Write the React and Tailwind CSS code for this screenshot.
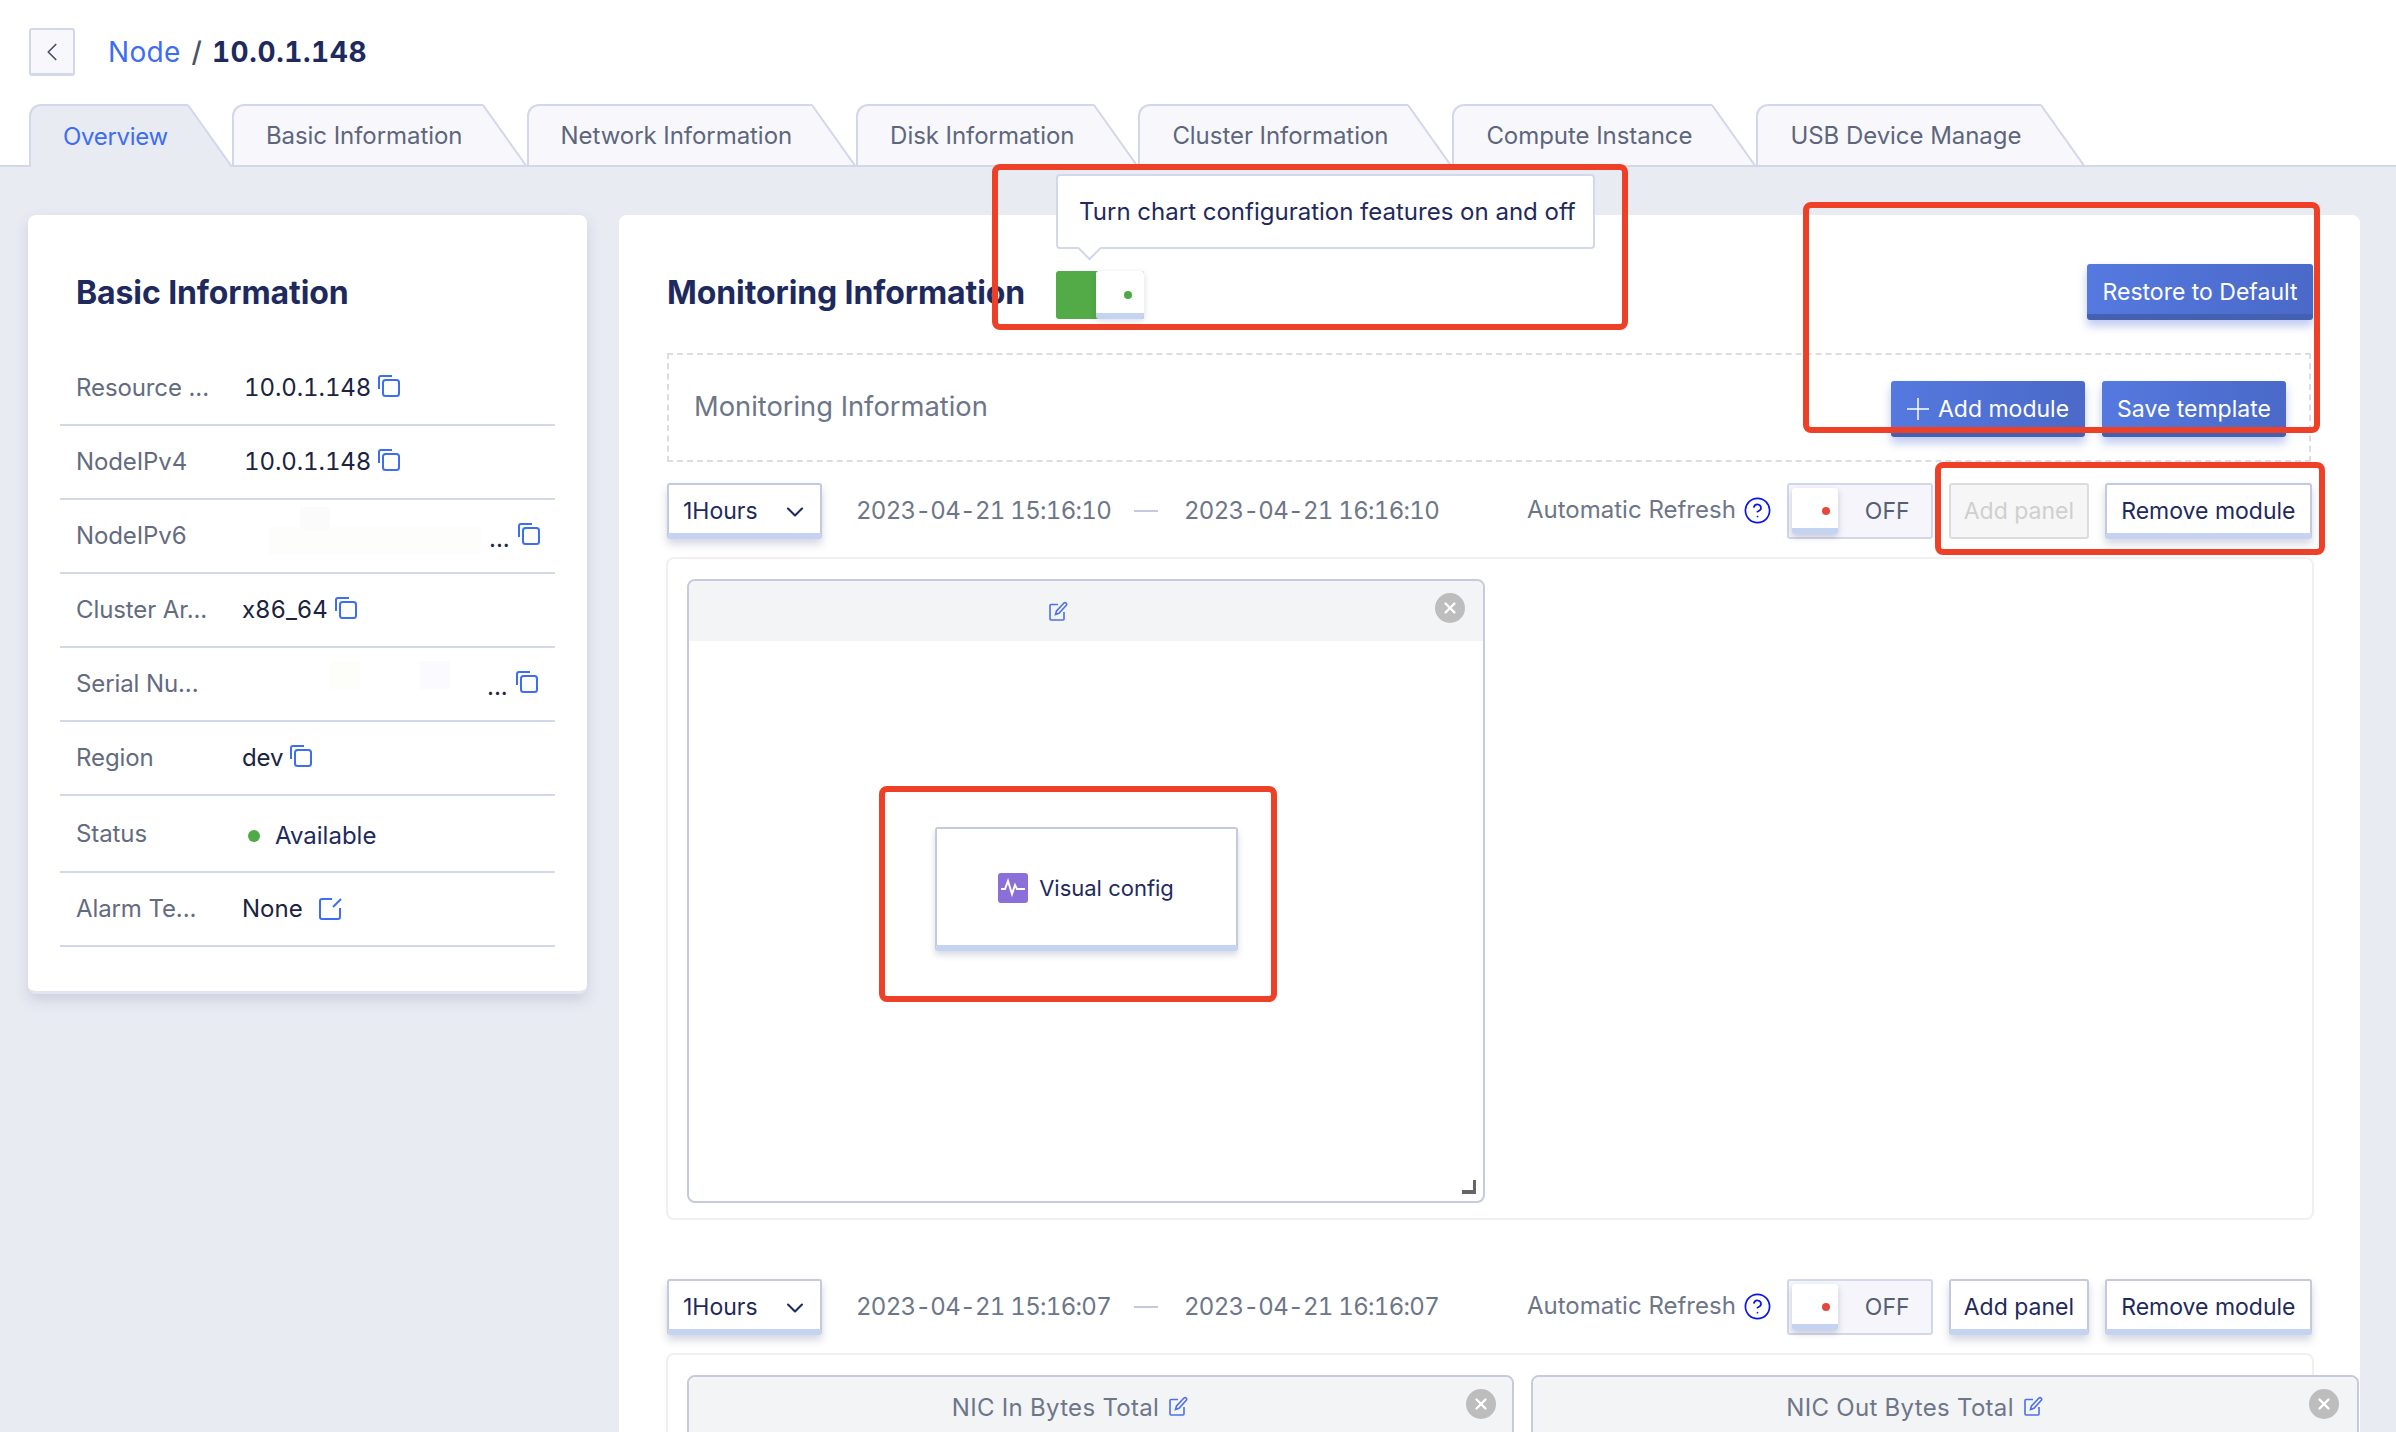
import React from 'react'
import { ChevronDown, ChevronLeft, CircleHelp, X } from 'lucide-react'

const tabs = ['Overview', 'Basic Information', 'Network Information', 'Disk Information', 'Cluster Information', 'Compute Instance', 'USB Device Manage']

const CopyIcon = () => (
  <svg width="22" height="22" viewBox="0 0 22 22" fill="none" stroke="#3d6df2" strokeWidth="2" className="shrink-0">
    <rect x="5" y="5" width="16" height="16" rx="2.5" />
    <path d="M1 14V3a2 2 0 0 1 2-2h11" />
  </svg>
)

const AlarmEditIcon = () => (
  <svg width="23" height="23" viewBox="0 0 23 23" fill="none" stroke="#3d6df2" strokeWidth="2" className="shrink-0">
    <path d="M13 2H3a2 2 0 0 0-2 2v16a2 2 0 0 0 2 2h16a2 2 0 0 0 2-2V11" />
    <path d="M14 10l8-8" />
  </svg>
)

const PenIcon = () => (
  <svg width="19" height="20" viewBox="0 0 19 20" fill="none" stroke="#4d6fe8" strokeWidth="1.6" className="shrink-0">
    <path d="M9 3.500H2a1 1 0 0 0-1 1V18a1 1 0 0 0 1 1h12a1 1 0 0 0 1-1v-7" />
    <path d="M6.500 13.500l1-3.500 7.500-8a1.400 1.400 0 0 1 2 0l.3.300a1.400 1.400 0 0 1 0 2l-7.300 8z" />
  </svg>
)

const Tab = ({ label, active }) => {
  const fill = active ? '#e9ebf3' : '#f8f8fc'
  return (
    <div className="flex">
      <div className={`h-[63px] pl-[32px] pr-[20px] flex items-center border-l-2 border-t-2 border-[#d3d7ea] rounded-tl-xl ${active ? 'bg-[#e9ebf3] text-[#3d6df2]' : 'bg-[#f8f8fc] text-[#5d667c] border-b-2'}`}>
        <span className={`text-[24px] whitespace-nowrap mt-[1px] ${active ? 'tracking-[-0.3px]' : 'tracking-[-0.05px]'}`}>{label}</span>
      </div>
      <svg width="44" height="63" viewBox="0 0 44 63" className="shrink-0">
        <polygon points="0,1 0,63 44,63" fill={fill} />
        <path d="M0 1L44 63" stroke="#d3d7ea" strokeWidth="2" fill="none" />
        {!active && <path d="M0 62H44" stroke="#d3d7ea" strokeWidth="2" />}
      </svg>
    </div>
  )
}

const InfoRow = ({ label, h = 'h-[74px]', children }) => (
  <div className={`${h} flex items-center pl-[16px] border-b-2 border-[#d3d7ea]`}>
    <span className="w-[166px] shrink-0 text-[24px] tracking-[-0.1px] text-[#636b80] whitespace-nowrap">{label}</span>
    {children}
  </div>
)

const CopyValue = ({ value, pl = 'pl-0' }) => (
  <div className={`flex items-center gap-[7px] ${pl} text-[24px] tracking-[-0.1px] tabular-nums text-[#1a2340]`}>
    <span>{value}</span>
    <span className="-mt-[4px]"><CopyIcon /></span>
  </div>
)

const Redacted = ({ dots = 'pl-[247px]', children }) => (
  <div className={`relative flex items-center gap-[8px] ${dots} text-[24px] text-[#1a2340]`}>
    {children}
    <span className="mt-[6px]">...</span>
    <span className="-mt-[4px]"><CopyIcon /></span>
  </div>
)

const SolidBtn = ({ className, children }) => (
  <div className={`h-[56px] pt-[6px] flex items-center justify-center gap-[9px] rounded-[3px] text-[23px] text-white border-b-[6px] border-[#4460b0] bg-gradient-to-r from-[#5579e0] to-[#4a69c8] shadow-[0_6px_10px_rgba(70,100,210,0.35)] ${className}`}>
    {children}
  </div>
)

const OutlineBtn = ({ className, children }) => (
  <div className={`h-[56px] pt-[5px] flex items-center justify-center rounded-[3px] bg-white text-[23px] text-[#1e2a5e] border-2 border-[#c4c9de] border-b-[6px] border-b-[#c5d3f3] shadow-[0_5px_8px_rgba(60,70,110,0.22)] ${className}`}>
    {children}
  </div>
)

const Controls = ({ from, to, disabled }) => (
  <div className="flex items-center h-[56px] w-[1646px]">
    <OutlineBtn className="w-[155px] pl-[14px] pr-[11px] !justify-between">
      <span>1Hours</span>
      <ChevronDown size={28} strokeWidth={1.8} />
    </OutlineBtn>
    <span className="ml-[34px] w-[254px] text-[24px] tracking-[-0.7px] tabular-nums text-[#6d7689] whitespace-nowrap">{from}</span>
    <span className="ml-[24px] w-[24px] h-[2px] bg-[#c4c9de]" />
    <span className="ml-[26px] w-[254px] text-[24px] tracking-[-0.7px] tabular-nums text-[#6d7689] whitespace-nowrap">{to}</span>
    <span className="ml-[89px] text-[24px] text-[#6d7689] whitespace-nowrap -mt-[2px]">Automatic Refresh</span>
    <span className="ml-[7px] -mr-[2px] -mt-[2px] text-[#0a14e6]"><CircleHelp size={29} strokeWidth={1.4} /></span>
    <div className="ml-[17px] w-[146px] h-[56px] flex items-center rounded-[3px] border-2 border-[#d3d7ea] bg-[#f5f5fb] pl-[3px]">
      <div className="w-[46px] h-[46px] pt-[6px] flex items-center justify-end pr-[8px] rounded-[3px] bg-white border-b-[6px] border-[#c5d3f3] shadow-[0_3px_6px_rgba(60,70,110,0.25)]">
        <span className="w-[8px] h-[8px] rounded-full bg-[#e5483a]" />
      </div>
      <span className="ml-[27px] text-[23px] text-[#566075]">OFF</span>
    </div>
    {disabled ? (
      <div className="ml-[16px] w-[140px] h-[56px] flex items-center justify-center rounded-[3px] border-2 border-[#dcdcdc] bg-[#f6f6f6] text-[23px] text-[#cfcfcf]">Add panel</div>
    ) : (
      <OutlineBtn className="ml-[16px] w-[140px]">Add panel</OutlineBtn>
    )}
    <OutlineBtn className="ml-[16px] w-[207px]">Remove module</OutlineBtn>
  </div>
)

const CloseDot = ({ className }) => (
  <span className={`absolute w-[30px] h-[30px] rounded-full bg-[#bdbdbd] flex items-center justify-center text-white ${className}`}>
    <X size={18} strokeWidth={3} />
  </span>
)

const NicPanel = ({ title, className, closeAt }) => (
  <div className={`relative shrink-0 h-[400px] rounded-lg border-2 border-[#c5cadc] bg-white ${className}`}>
    <div className="h-[60px] rounded-t-lg bg-[#f3f4f6] flex items-center justify-center gap-[10px] pr-[61px] pt-[2px] text-[24px] tracking-[0.3px] text-[#6d7689]">
      <span>{title}</span>
      <span className="-mt-[4px]"><PenIcon /></span>
    </div>
    <CloseDot className={`top-[12px] ${closeAt}`} />
  </div>
)

const Annotation = ({ className }) => (
  <div className={`absolute border-[6px] border-[#ee4027] rounded-[8px] pointer-events-none ${className}`} />
)

export default function App() {
  return (
    <div className="relative w-[2396px] h-[1432px] overflow-hidden bg-[#e9ebf3] font-['Inter',sans-serif]">
      {/* Header */}
      <div className="bg-white pt-[28px] pl-[29px]">
        <div className="flex items-center h-[48px]">
          <div className="w-[46px] h-[48px] flex items-center justify-center rounded-[3px] border-2 border-[#d3d7ea] border-b-[3px] bg-[#f8f8fc] text-[#4a5268]">
            <ChevronLeft size={30} strokeWidth={1.4} />
          </div>
          <div className="ml-[33px] flex items-center text-[28px]">
            <span className="text-[#3d6df2] tracking-[0.3px]">Node</span>
            <span className="ml-[11px] mr-[10px] text-[#4a5268] font-medium">/</span>
            <span className="font-bold text-[#1e2a5e] tracking-[0.6px] tabular-nums">10.0.1.148</span>
          </div>
        </div>
        <div className="flex mt-[28px]">
          {tabs.map((t, i) => <Tab key={t} label={t} active={i === 0} />)}
        </div>
      </div>
      <div className="-mt-[2px] h-[2px] bg-[#d3d7ea]" />

      {/* Content */}
      <div className="flex items-start gap-[32px] pt-[48px] pl-[28px]">
        <div className="w-[559px] shrink-0 bg-white rounded-lg border-b-[3px] border-[#e4e6ef] shadow-[0_6px_14px_rgba(70,80,120,0.18)] pb-[44px]">
          <div className="h-[137px] pl-[48px] pt-[58px] text-[32px] leading-[40px] font-bold tracking-[-0.1px] text-[#1e2a5e]">Basic Information</div>
          <div className="mx-[32px]">
            <InfoRow label="Resource ..."><CopyValue value="10.0.1.148" pl="pl-[2px]" /></InfoRow>
            <InfoRow label="NodeIPv4"><CopyValue value="10.0.1.148" pl="pl-[2px]" /></InfoRow>
            <InfoRow label="NodeIPv6">
              <Redacted>
                <span className="absolute left-[27px] top-[12px] w-[212px] h-[28px] bg-[#fdfdfb]" />
                <span className="absolute left-[58px] -top-[8px] w-[30px] h-[22px] bg-[#fbfbfb]" />
              </Redacted>
            </InfoRow>
            <InfoRow label="Cluster Ar..."><CopyValue value="x86_64" /></InfoRow>
            <InfoRow label="Serial Nu...">
              <Redacted dots="pl-[245px]">
                <span className="absolute left-[88px] -top-[2px] w-[30px] h-[28px] bg-[#fdfdfa]" />
                <span className="absolute left-[178px] -top-[2px] w-[30px] h-[28px] bg-[#fbfbff]" />
              </Redacted>
            </InfoRow>
            <InfoRow label="Region"><CopyValue value="dev" /></InfoRow>
            <InfoRow label="Status" h="h-[77px]">
              <div className="flex items-center mt-[4px] pl-[6px] text-[24px] text-[#1e2a5e]">
                <span className="w-[12px] h-[12px] rounded-full bg-[#4faa45]" />
                <span className="ml-[15px]">Available</span>
              </div>
            </InfoRow>
            <InfoRow label="Alarm Te...">
              <div className="flex items-center gap-[16px] text-[24px] text-[#1a2340]">
                <span>None</span>
                <span className="-mt-[2px]"><AlarmEditIcon /></span>
              </div>
            </InfoRow>
          </div>
        </div>

        <div className="w-[1741px] shrink-0 h-[1300px] bg-white rounded-t-lg pl-[48px]">
          <div className="flex items-center h-[56px] mt-[49px] w-[1646px]">
            <span className="text-[32px] font-bold tracking-[-0.1px] text-[#1e2a5e] whitespace-nowrap mt-[2px]">Monitoring Information</span>
            <div className="relative ml-[31px] mt-[6px] flex w-[88px] h-[48px] rounded-[3px] bg-[#52ab46]">
              <div className="ml-auto w-[48px] h-[48px] pt-[6px] flex items-center justify-end pr-[12px] rounded-[3px] bg-white border-b-[6px] border-[#c5d3f3] shadow-[0_2px_6px_rgba(60,70,110,0.18)]">
                <span className="w-[8px] h-[8px] rounded-full bg-[#4faa45]" />
              </div>
              <div className="absolute left-0 -top-[97px] w-[539px] h-[75px] flex items-center pl-[21px] bg-white rounded-[4px] border-2 border-[#d3d7ea] text-[24px] text-[#1e2a5e] whitespace-nowrap">
                Turn chart configuration features on and off
                <span className="absolute left-[23px] -bottom-[10px] w-[17px] h-[17px] rotate-45 bg-white border-r-2 border-b-2 border-[#d3d7ea]" />
              </div>
            </div>
            <SolidBtn className="ml-auto w-[226px]">Restore to Default</SolidBtn>
          </div>

          <div className="mt-[33px] w-[1644px] h-[109px] flex items-center border-2 border-dashed border-[#dddddd] pl-[25px] pr-[23px]">
            <span className="text-[27.3px] text-[#6d7689] whitespace-nowrap -mt-[1px]">Monitoring Information</span>
            <div className="ml-auto flex gap-[17px] mt-[3px]">
              <SolidBtn className="w-[194px]">
                <svg width="22" height="22" viewBox="0 0 22 22" stroke="white" strokeWidth="1.5" className="shrink-0">
                  <path d="M11 0v22M0 11h22" />
                </svg>
                <span>Add module</span>
              </SolidBtn>
              <SolidBtn className="w-[184px]">Save template</SolidBtn>
            </div>
          </div>

          <div className="mt-[21px]">
            <Controls from="2023-04-21 15:16:10" to="2023-04-21 16:16:10" disabled />
          </div>

          <div className="mt-[18px] -ml-[1px] w-[1648px] h-[663px] rounded-lg border-2 border-[#f0f0f0] pl-[19px] pt-[20px]">
            <div className="relative w-[798px] h-[624px] rounded-lg border-2 border-[#c5cadc]">
              <div className="h-[60px] rounded-t-lg bg-[#f3f4f6] flex items-center justify-center pr-[56px]">
                <PenIcon />
              </div>
              <CloseDot className="top-[12px] right-[18px]" />
              <div className="flex justify-center pt-[186px]">
                <div className="w-[303px] h-[124px] pt-[2px] flex items-center justify-center gap-[11px] rounded-[3px] bg-white border-2 border-[#c5cadc] border-b-[6px] border-b-[#c5d3f3] shadow-[0_4px_6px_rgba(60,70,110,0.2)]">
                  <svg width="30" height="30" viewBox="0 0 30 30" className="shrink-0">
                    <rect width="30" height="30" rx="3" fill="#8a6fd8" />
                    <path d="M3 16h4l3-8 4 13 3-9 2 4h8" fill="none" stroke="white" strokeWidth="2" />
                  </svg>
                  <span className="text-[22px] text-[#1e2a5e] whitespace-nowrap">Visual config</span>
                </div>
              </div>
              <svg width="14" height="14" viewBox="0 0 14 14" className="absolute right-[7px] bottom-[7px]">
                <path d="M11 0h3v14H0v-4h11z" fill="#666666" />
              </svg>
            </div>
          </div>

          <div className="mt-[59px]">
            <Controls from="2023-04-21 15:16:07" to="2023-04-21 16:16:07" />
          </div>

          <div className="mt-[18px] -ml-[1px] w-[1648px] h-[500px] rounded-lg border-2 border-[#f0f0f0] pl-[19px] pt-[20px]">
            <div className="flex gap-[17px]">
              <NicPanel title="NIC In Bytes Total" className="w-[827px]" closeAt="right-[16px]" />
              <NicPanel title="NIC Out Bytes Total" className="w-[828px]" closeAt="right-[18px]" />
            </div>
          </div>
        </div>
      </div>

      {/* Red review annotations */}
      <Annotation className="left-[992px] top-[164px] w-[636px] h-[166px]" />
      <Annotation className="left-[1803px] top-[202px] w-[517px] h-[231px]" />
      <Annotation className="left-[1935px] top-[462px] w-[390px] h-[93px]" />
      <Annotation className="left-[879px] top-[786px] w-[398px] h-[216px]" />
    </div>
  )
}
